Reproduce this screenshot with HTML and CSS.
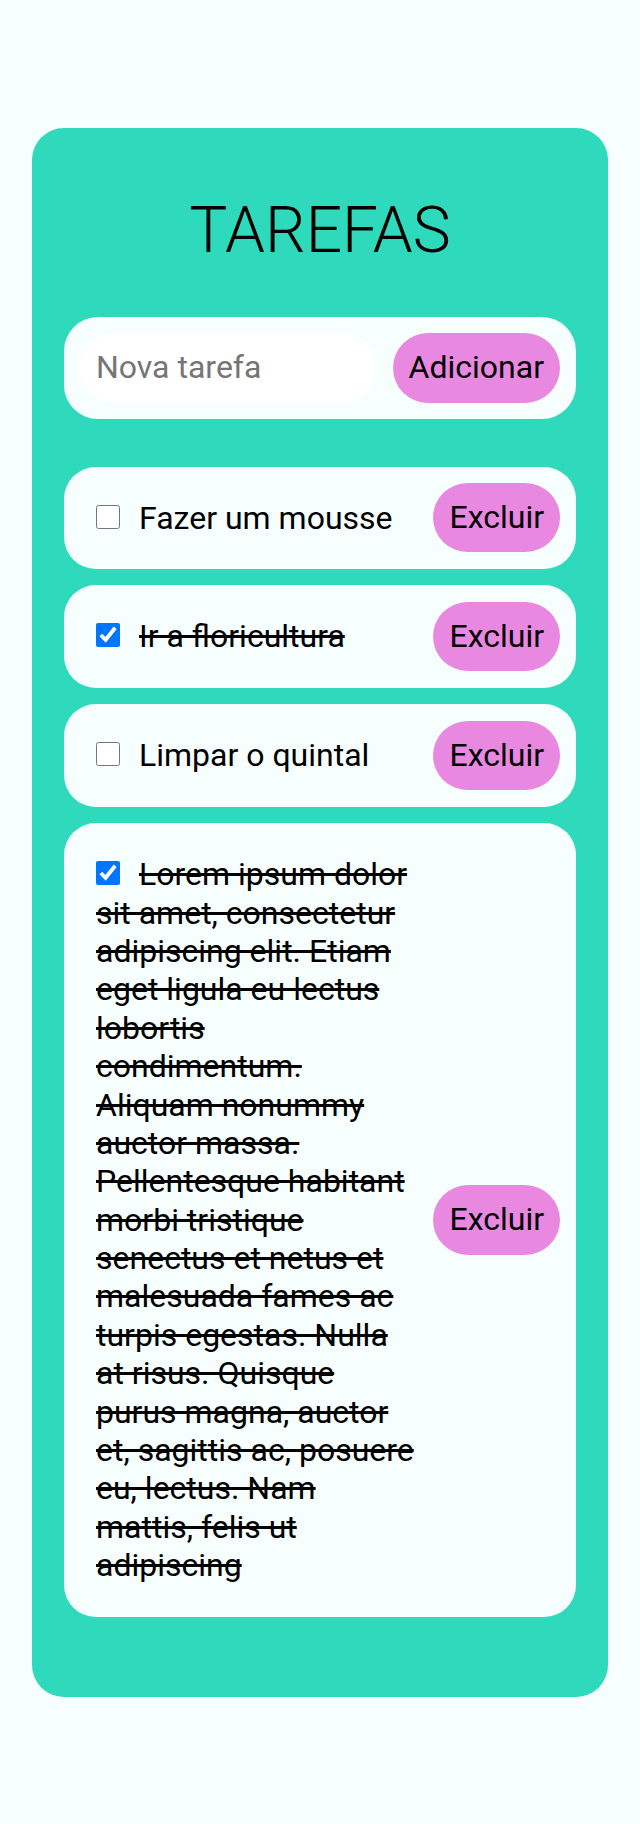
FILE: index.html
```html
<!DOCTYPE html>
<html lang="pt-BR">
<head>
    <meta charset="UTF-8">
    <meta name="viewport" content="width=device-width, initial-scale=1.0">
    <title>Tarefas</title>
    <link rel="stylesheet" href="styles.css">
</head>
<body>
    <div class="card">
        <h1 class="title">TAREFAS</h1>
        <form class="new-task">
            <input type="text" class="new-task-input" placeholder="Nova tarefa">
            <button type="button" class="btn">Adicionar</button>
        </form>
        <ul class="task-list">
            <li class="task">
                <label class="task-label"><input type="checkbox" class="task-check"><span class="task-text">Fazer um mousse</span></label>
                <button type="button" class="btn">Excluir</button>
            </li>
            <li class="task">
                <label class="task-label"><input type="checkbox" class="task-check" checked><span class="task-text">Ir a floricultura</span></label>
                <button type="button" class="btn">Excluir</button>
            </li>
            <li class="task">
                <label class="task-label"><input type="checkbox" class="task-check"><span class="task-text">Limpar o quintal</span></label>
                <button type="button" class="btn">Excluir</button>
            </li>
            <li class="task">
                <label class="task-label"><input type="checkbox" class="task-check" checked><span class="task-text">Lorem ipsum dolor sit amet, consectetur adipiscing elit. Etiam eget ligula eu lectus lobortis condimentum. Aliquam nonummy auctor massa. Pellentesque habitant morbi tristique senectus et netus et malesuada fames ac turpis egestas. Nulla at risus. Quisque purus magna, auctor et, sagittis ac, posuere eu, lectus. Nam mattis, felis ut adipiscing</span></label>
                <button type="button" class="btn">Excluir</button>
            </li>
        </ul>
    </div>
</body>
</html>
```

FILE: styles.css
```css
body {
    margin: 0;
    padding: 128px 32px;
    background-color: #f7fffe;
    font-family: "Roboto", sans-serif;
    font-size: 32px;
    color: #000;
}

.card {
    background: #2fd9bc;
    border-radius: 32px;
    padding: 32px 32px 80px;
}

.title {
    margin: 33px 0 49px;
    text-align: center;
    font-size: 64px;
    font-weight: 300;
    line-height: 75px;
}

.new-task {
    display: flex;
    align-items: center;
    gap: 16px;
    background: #f7fffe;
    border-radius: 34px;
    padding: 16px;
    margin: 0 0 48px;
}

.new-task-input {
    flex: 1;
    min-width: 0;
    border: none;
    outline: none;
    background: #fff;
    border-radius: 35px;
    padding: 16px;
    font-family: inherit;
    font-size: 32px;
    line-height: 37.5px;
    color: #000;
}

.new-task-input::placeholder {
    color: #757575;
}

.btn {
    flex-shrink: 0;
    background: #e988e0;
    border: none;
    border-radius: 35px;
    padding: 16px;
    font-family: inherit;
    font-size: 32px;
    line-height: 37.5px;
    color: #000;
    cursor: pointer;
}

.task-list {
    list-style: none;
    margin: 0;
    padding: 0;
    display: flex;
    flex-direction: column;
    gap: 16.5px;
}

.task {
    display: flex;
    align-items: center;
    justify-content: space-between;
    background: #f7fffe;
    border-radius: 32px;
    padding: 16px;
}

.task-label {
    flex: 1;
    min-width: 0;
    padding: 16px;
    line-height: 1.2;
}

.task-check {
    width: 24px;
    height: 24px;
    margin: 0 19px 1px 0;
    vertical-align: baseline;
}

.task-check:checked + .task-text {
    text-decoration: line-through;
}
```
